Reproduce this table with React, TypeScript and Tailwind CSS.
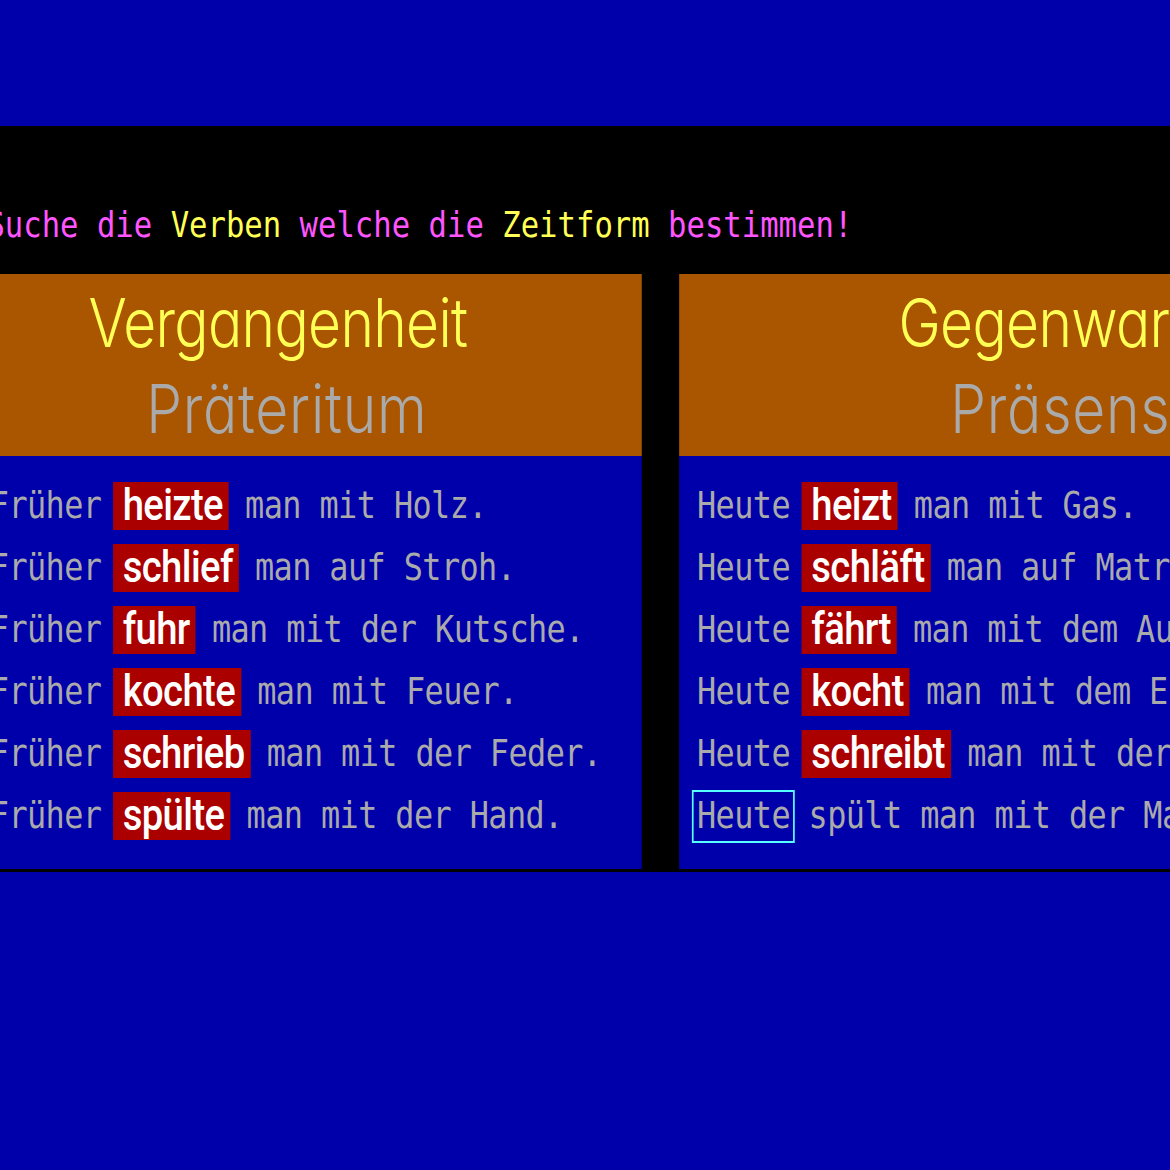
import React from 'react';

interface Line {
  verb?: string;
  rest: string;
  marked?: boolean;
}

const past: Line[] = [
  { verb: 'heizte', rest: 'man mit Holz.' },
  { verb: 'schlief', rest: 'man auf Stroh.' },
  { verb: 'fuhr', rest: 'man mit der Kutsche.' },
  { verb: 'kochte', rest: 'man mit Feuer.' },
  { verb: 'schrieb', rest: 'man mit der Feder.' },
  { verb: 'spülte', rest: 'man mit der Hand.' },
];

const present: Line[] = [
  { verb: 'heizt', rest: 'man mit Gas.' },
  { verb: 'schläft', rest: 'man auf Matratzen.' },
  { verb: 'fährt', rest: 'man mit dem Auto.' },
  { verb: 'kocht', rest: 'man mit dem Elektroherd.' },
  { verb: 'schreibt', rest: 'man mit der Schreibmaschine.' },
  { rest: ' spült man mit der Maschine.', marked: true },
];

const Row = ({ lead, line }: { lead: string; line: Line }) => (
  <div className="flex h-[62px] items-center whitespace-pre">
    {line.marked ? (
      <span className="-ml-[6px] -mr-[6px] flex h-[53px] items-center border-2 border-[#55FFFF] px-[4px]">
        {lead}
      </span>
    ) : (
      <span>{lead}</span>
    )}
    {line.verb && (
      <span className="ml-[14px] mr-[19px] flex h-[48px] items-center bg-[#AA0000] pr-[7px] pb-[4px] pl-[11px] font-['Roboto',sans-serif] text-[45px] leading-none font-medium text-white">
        {line.verb}
      </span>
    )}
    <span>{line.rest}</span>
  </div>
);

const Panel = ({
  title,
  sub,
  lead,
  lines,
  className,
  titlePad,
  subPad,
}: {
  title: string;
  sub: string;
  lead: string;
  lines: Line[];
  className: string;
  titlePad: string;
  subPad: string;
}) => (
  <div className={`flex shrink-0 flex-col ${className}`}>
    <div className="flex h-[182px] flex-col bg-[#AA5500] pt-[6px] font-['Inter',sans-serif] text-[67px] leading-[86px] font-light whitespace-nowrap [font-feature-settings:'cv11']">
      <div className={`tracking-[-0.8px] text-[#FFFF55] ${titlePad}`}>{title}</div>
      <div className={`tracking-[0.9px] text-[#AAAAAA] ${subPad}`}>{sub}</div>
    </div>
    <div className="bg-[#0000AA] pt-[19px] pb-[22px] pl-[21px] font-['DejaVu_Sans_Mono',monospace] text-[37.5px] leading-none tracking-[-0.7px] text-[#AAAAAA]">
      {lines.map((line, i) => (
        <Row key={i} lead={lead} line={line} />
      ))}
    </div>
  </div>
);

export default function App() {
  return (
    <div className="h-[1170px] w-[1170px] overflow-hidden bg-[#0000AA]">
      <div className="w-[1377px] origin-top-left scale-x-[0.85] pt-[126px]">
        <div className="bg-black pt-[81px] pb-[3px]">
          {/* task line */}
          <div className="-ml-[16px] h-[35px] font-['DejaVu_Sans_Mono',monospace] text-[36px] leading-none whitespace-pre text-[#FF55FF]">
            Suche die <span className="text-[#FFFF55]">Verben</span> welche die{' '}
            <span className="text-[#FFFF55]">Zeitform</span> bestimmen!
          </div>

          <div className="mt-[32px] flex gap-[44px]">
            <Panel
              title="Vergangenheit"
              sub="Präteritum"
              lead="Früher"
              lines={past}
              className="-ml-[33px] w-[788px]"
              titlePad="pl-[137px]"
              subPad="pl-[205px]"
            />
            <Panel
              title="Gegenwart"
              sub="Präsens"
              lead="Heute"
              lines={present}
              className="w-[800px]"
              titlePad="pl-[258px]"
              subPad="pl-[319px]"
            />
          </div>
        </div>
      </div>
    </div>
  );
}
